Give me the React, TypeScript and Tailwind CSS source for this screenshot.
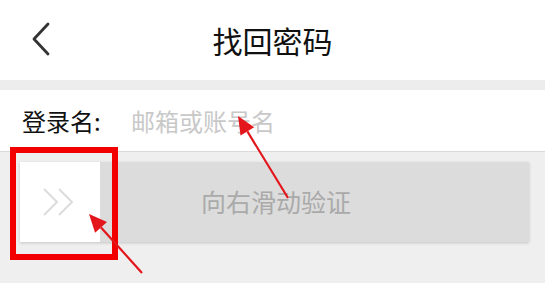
const font = { fontFamily: '"Noto Sans CJK SC", "Noto Sans", sans-serif' };

function Arrow({ x1, y1, x2, y2 }: { x1: number; y1: number; x2: number; y2: number }) {
  // arrow from (x1,y1) to its tip at (x2,y2)
  const ang = Math.atan2(y2 - y1, x2 - x1);
  const len = 18;
  const w = 8;
  const bx = x2 - len * Math.cos(ang);
  const by = y2 - len * Math.sin(ang);
  const px = -Math.sin(ang) * w;
  const py = Math.cos(ang) * w;
  return (
    <g>
      <line x1={x1} y1={y1} x2={bx} y2={by} stroke="#e3161c" strokeWidth="2.2" />
      <polygon points={`${x2},${y2} ${bx + px},${by + py} ${bx - px},${by - py}`} fill="#e3161c" />
    </g>
  );
}

export default function App() {
  return (
    <div className="relative h-[283px] w-[545px] overflow-hidden bg-[#efefef]" style={font}>
      <header className="relative flex h-[80px] items-center justify-center bg-white">
        <svg className="absolute left-[28px] top-[20px]" width="24" height="38" viewBox="0 0 24 38" fill="none" stroke="#333" strokeWidth="2.8" strokeLinecap="round" strokeLinejoin="round">
          <polyline points="20,4 6,19 20,34" />
        </svg>
        <h1 className="text-[30px] leading-none text-[#111]">找回密码</h1>
      </header>
      <div className="h-[10px] bg-[#ededed]" />
      <div className="flex h-[62px] items-center border-b border-[#dadada] bg-white pl-[22px]">
        <span className="w-[109px] text-[24px] text-[#111]">登录名:</span>
        <span className="text-[24px] text-[#c8c8c8]">邮箱或账号名</span>
      </div>
      <div className="pl-[20px] pr-[16px] pt-[10px]">
        <div className="flex h-[80px] shadow-[0_1px_3px_rgba(0,0,0,0.18)]">
          <div className="flex w-[80px] items-center bg-white pl-[22px]">
            <svg width="32" height="30" viewBox="0 0 32 30" fill="none" stroke="#dcdcdc" strokeWidth="2">
              <polyline points="2,2 15,15 2,28" />
              <polyline points="17,2 30,15 17,28" />
            </svg>
          </div>
          <div className="flex flex-1 items-center bg-[#dcdcdc] pl-[101px]">
            <span className="text-[25px] text-[#aaaaaa]">向右滑动验证</span>
          </div>
        </div>
      </div>
      <div className="absolute left-[10px] top-[147px] h-[113px] w-[108px] border-[6px] border-[#f20000]" />
      <svg className="absolute left-0 top-0" width="545" height="283">
        <Arrow x1={288} y1={198} x2={238} y2={116} />
        <Arrow x1={142} y1={273} x2={89} y2={214} />
      </svg>
    </div>
  );
}
